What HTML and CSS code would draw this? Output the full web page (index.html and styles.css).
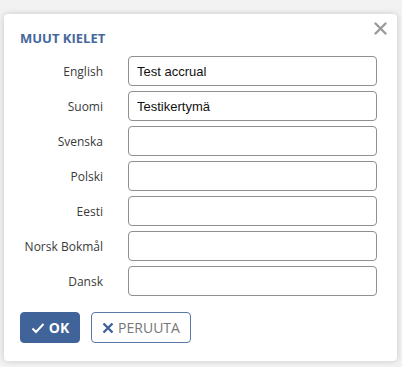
FILE: index.html
```html
<!DOCTYPE html>
<html>
<head>
<meta charset="utf-8">
<link rel="stylesheet" href="styles.css">
</head>
<body>
<div class="dialog">
  <button class="close" aria-label="close">
    <svg width="13" height="13" viewBox="0 0 13 13"><path d="M1.5 1.5L11.5 11.5M11.5 1.5L1.5 11.5" stroke="#9a9a9a" stroke-width="2.4" stroke-linecap="round"/></svg>
  </button>
  <h2 class="title">MUUT KIELET</h2>
  <div class="form">
    <label class="lbl">English</label><input class="inp" value="Test accrual">
    <label class="lbl">Suomi</label><input class="inp" value="Testikertymä">
    <label class="lbl">Svenska</label><input class="inp" value="">
    <label class="lbl">Polski</label><input class="inp" value="">
    <label class="lbl">Eesti</label><input class="inp" value="">
    <label class="lbl">Norsk Bokmål</label><input class="inp" value="">
    <label class="lbl">Dansk</label><input class="inp" value="">
  </div>
  <div class="actions">
    <button class="btn btn-ok"><svg width="14" height="12" viewBox="0 0 14 12"><path d="M1.5 6.5L5 10L12.5 2" fill="none" stroke="#fff" stroke-width="2"/></svg>OK</button>
    <button class="btn btn-cancel"><svg width="12" height="12" viewBox="0 0 12 12"><path d="M1.5 1.5L10.5 10.5M10.5 1.5L1.5 10.5" stroke="#3f6398" stroke-width="2.4"/></svg>PERUUTA</button>
  </div>
</div>
</body>
</html>
```
FILE: styles.css
```css
html, body {
  margin: 0;
  padding: 0;
}
body {
  background: #f2f2f2;
  width: 402px;
  height: 367px;
  overflow: hidden;
  font-family: "Open Sans", "Noto Sans", sans-serif;
}
.dialog {
  position: relative;
  box-sizing: border-box;
  margin: 14px 0 0 4px;
  width: 393px;
  height: 347px;
  background: #fff;
  border-radius: 4px;
  box-shadow: 0 0 6px rgba(0, 0, 0, 0.18);
  padding: 16px 0 0 16px;
}
.close {
  position: absolute;
  top: 8px;
  right: 10px;
  border: 0;
  background: none;
  padding: 0;
  width: 13px;
  height: 13px;
  display: flex;
}
.title {
  margin: 0 0 10px 0;
  font-size: 13px;
  line-height: 16px;
  font-weight: 700;
  color: #45679c;
  letter-spacing: 0;
}
.form {
  display: grid;
  grid-template-columns: 83px 249px;
  column-gap: 25px;
  row-gap: 5px;
  align-items: center;
}
.lbl {
  text-align: right;
  font-size: 12px;
  color: #3a3a3a;
  white-space: nowrap;
}
.inp {
  box-sizing: border-box;
  height: 30px;
  width: 249px;
  border: 1px solid #8f8f8f;
  border-radius: 4px;
  padding: 0 8px;
  font-family: "Liberation Sans", Arial, sans-serif;
  font-size: 13px;
  color: #111;
  outline: none;
}
.actions {
  display: flex;
  gap: 11px;
  margin-top: 16px;
}
.btn {
  box-sizing: border-box;
  height: 31px;
  border-radius: 4px;
  display: flex;
  align-items: center;
  justify-content: center;
  gap: 4px;
  font-family: "Open Sans", "Noto Sans", sans-serif;
  font-size: 14px;
  padding: 0;
}
.btn-ok {
  width: 60px;
  background: #40639a;
  border: 1px solid #40639a;
  color: #fff;
  font-weight: 700;
}
.btn-cancel {
  width: 100px;
  background: #fff;
  border: 1px solid #5a78a8;
  color: #777;
  font-weight: 400;
}
```
